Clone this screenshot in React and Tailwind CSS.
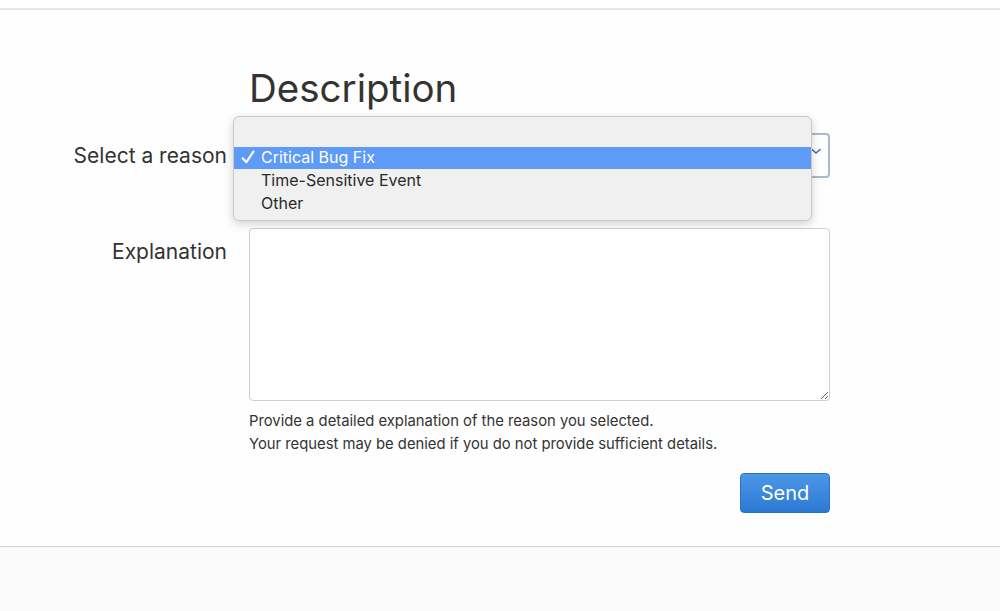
import React from "react"

const font = { fontFamily: "Inter, 'Liberation Sans', sans-serif" }

function ReasonMenu() {
    const options = ["Critical Bug Fix", "Time-Sensitive Event", "Other"]
    return (
        <div className="absolute left-[-16px] top-[-17px] w-[579px] rounded-[6px] border border-[#c9c9c9] bg-[#f0f0f0] pt-[7px] pb-[5px] shadow-[0_3px_10px_rgba(0,0,0,0.18)]">
            <div className="h-[23px]" />
            {options.map((opt, i) => (
                <div
                    key={opt}
                    className={
                        i === 0
                            ? "flex h-[22px] items-center bg-[#5e9bf7] pb-[2px] text-white"
                            : "flex h-[23px] items-center pb-[1px] text-[#2a2a2a]"
                    }
                >
                    <span className="flex w-[27px] justify-start pl-[7px]">
                        {i === 0 && (
                            <svg width="14" height="14" viewBox="0 0 14 14" fill="none">
                                <path d="M1.6 8.2 L5.4 12.2 L12.4 1.6" stroke="white" strokeWidth="2.1" strokeLinecap="round" strokeLinejoin="round" />
                            </svg>
                        )}
                    </span>
                    <span className="text-[16px] leading-none">{opt}</span>
                </div>
            ))}
        </div>
    )
}

export default function App() {
    return (
        <div className="min-h-[611px] w-full bg-[#fbfbfb] text-[#333]" style={font}>
            <div className="h-[8px] bg-white" />
            <main className="h-[539px] border-t-2 border-b border-t-[#e6e6e6] border-b-[#d4d4d4] bg-[#fefefe]">
                <div className="grid grid-cols-[227px_581px] gap-x-[22px] pt-[54px]">
                    <div />
                    <h1 className="text-[38.5px] leading-[48px] font-normal text-[#333]">Description</h1>

                    <label className="mt-[21px] flex h-[45px] items-center justify-end text-[21px] text-[#333]">
                        Select a reason
                    </label>
                    <div className="relative mt-[21px] h-[45px]">
                        <div className="flex h-full items-start justify-end rounded-[4px] border-2 border-[#a9b8cc] bg-white pr-[6px] pt-[10px]">
                            <svg width="12" height="12" viewBox="0 0 12 12" fill="none">
                                <path d="M2 4.5 L6 8 L10 4.5" stroke="#4a6d99" strokeWidth="1.6" strokeLinecap="round" />
                            </svg>
                        </div>
                        <ReasonMenu />
                    </div>

                    <label className="mt-[50px] pt-[11px] text-right text-[21px] leading-[26px] text-[#333]">
                        Explanation
                    </label>
                    <div className="mt-[50px]">
                        <textarea className="block h-[173px] w-full resize rounded-[4px] border border-[#cfcfcf] bg-white" />
                        <p className="mt-[9px] text-[14.8px] leading-[23px] text-[#333]">
                            Provide a detailed explanation of the reason you selected.
                            <br />
                            Your request may be denied if you do not provide sufficient details.
                        </p>
                        <div className="mt-[17px] flex justify-end">
                            <button className="h-[40px] w-[90px] rounded-[4px] border border-[#2c72c6] bg-gradient-to-b from-[#4d97e8] to-[#2c79d4] text-[20px] text-white">
                                Send
                            </button>
                        </div>
                    </div>
                </div>
            </main>
        </div>
    )
}
